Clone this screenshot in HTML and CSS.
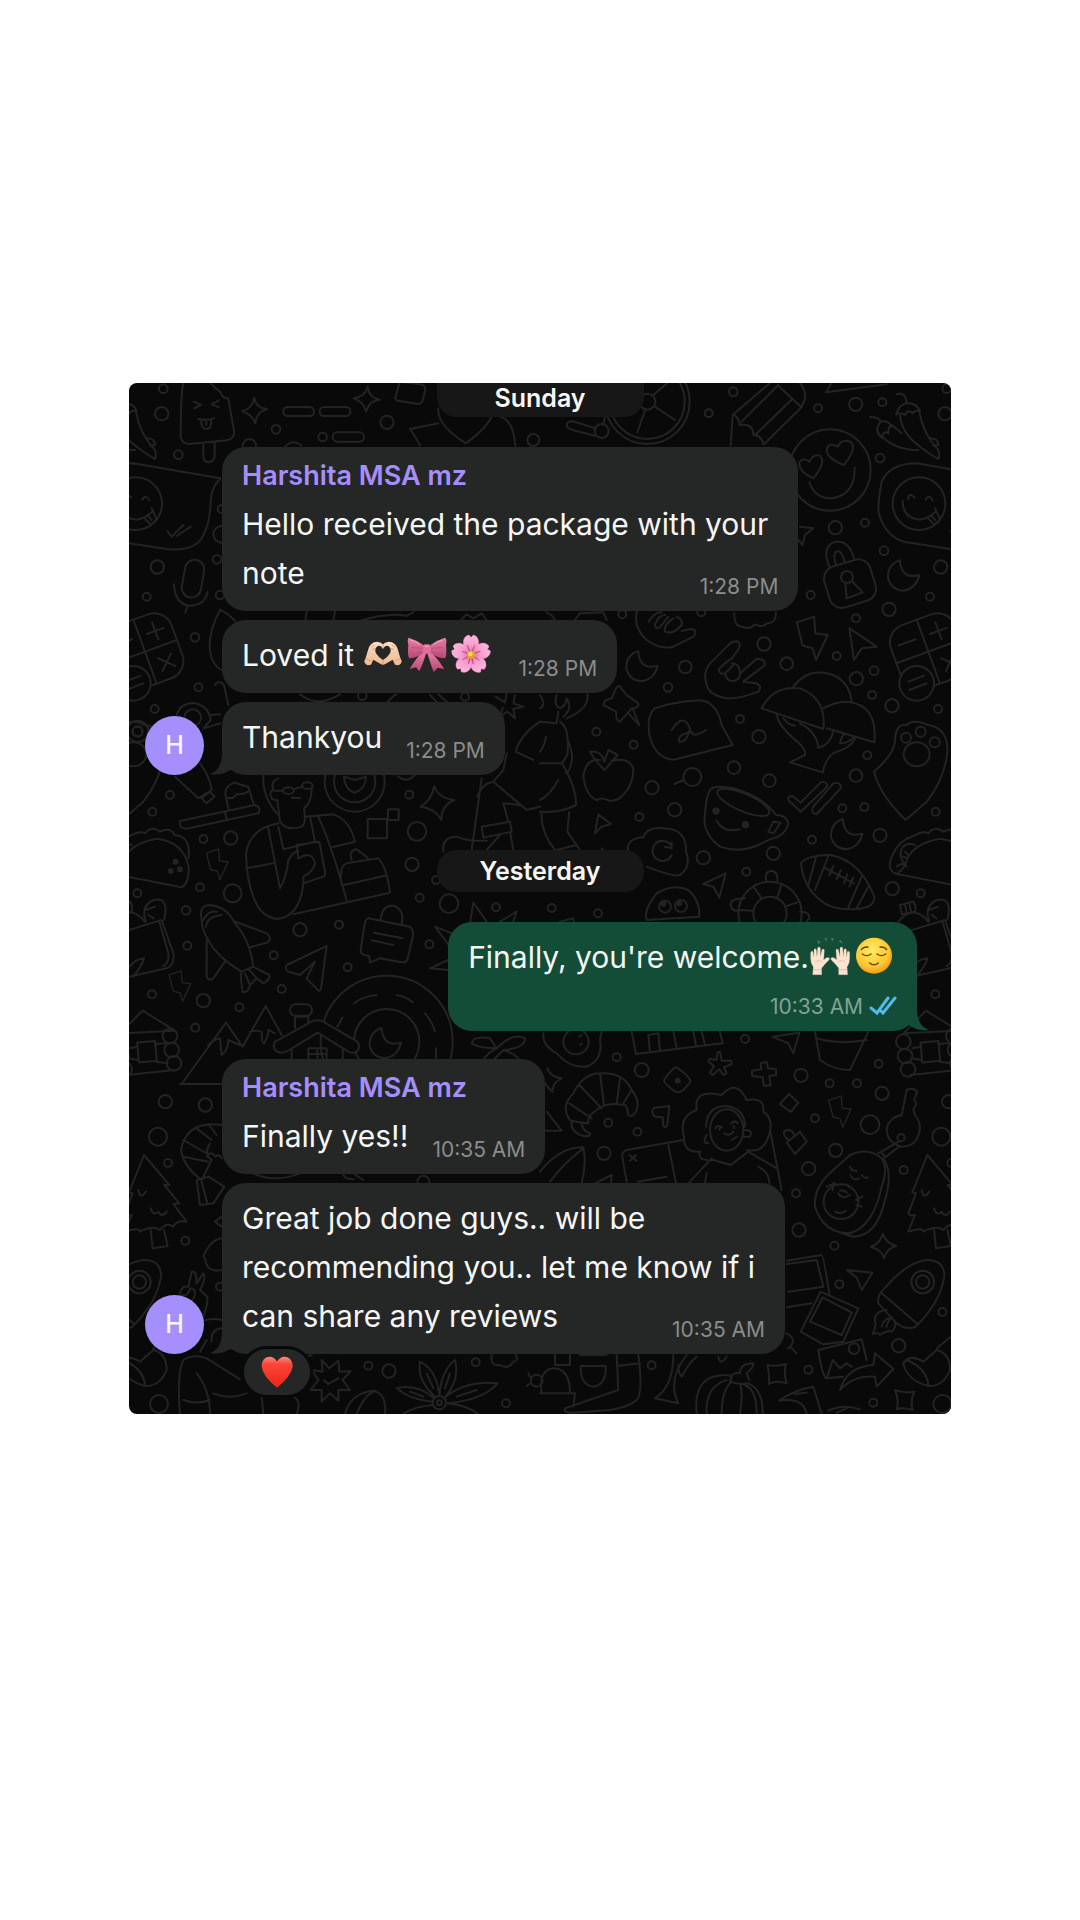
FILE: index.html
```html
<!DOCTYPE html>
<html lang="en">
  <head>
    <meta charset="UTF-8" />
    <meta name="viewport" content="width=device-width, initial-scale=1.0" />
    <title>Chat</title>
    <link rel="stylesheet" href="styles.css">
  </head>
  <body>
    <main class="chat">
      <!-- Doodle wallpaper -->
      <svg class="wallpaper" viewBox="27 24 2466 3093" preserveAspectRatio="xMidYMin slice" aria-hidden="true">
        <defs>
          <path id="bolt" d="M-47 -48L5 -65L9 -15L46 -10L11 65L1 30L-29 22Z" />
          <path id="moon" d="M-10 -46Q-48 -34 -46 8Q-36 43 0 45Q40 38 48 -2Q15 8 0 -12Q-10 -26 -10 -46Z" />
        </defs>
        <!-- Doodles that repeat on both edges -->
        <g id="edge">
          <g transform="translate(-1090 0)">
            <path d="M1070 58Q1098 50 1100 84M1068 118Q1080 85 1103 84Q1130 85 1140 108Q1125 104 1118 115Q1105 100 1095 120Q1080 110 1068 118M1080 122Q1085 175 1140 215Q1165 235 1195 252Q1200 240 1195 225Q1150 180 1138 110M1170 190Q1195 190 1195 210L1180 212M990 126Q1015 125 1022 140Q1000 165 1025 188Q1030 165 1045 175Q1045 150 1055 155Q1045 135 1022 140M1030 188Q1070 225 1135 225M1055 150Q1075 165 1085 175" />
            <circle cx="1137" cy="386" r="79" />
            <path d="M1390 310L1130 265Q1050 265 1025 320Q1010 400 1018 420Q1040 490 1100 502L1230 522Q1310 530 1335 490Q1360 450 1362 380Q1362 340 1390 312M1104 372Q1108 350 1124 368M1157 374Q1166 355 1178 376M1088 378Q1088 430 1140 434Q1165 430 1187 410M1162 428L1182 448Q1200 440 1198 428L1185 400M1172 420L1185 435M1232 468L1245 485L1280 450M1260 483L1302 455" />
            <g transform="rotate(-20 1165 830)">
              <rect x="1063" y="728" width="204" height="204" rx="55" />
              <path d="M1063 830H1267M1165 728V932M1188 782H1242M1215 755V809M1195 862L1236 902M1236 862L1195 902M1088 782H1142" />
            </g>
            <circle class="solid" cx="1130" cy="925" r="52" />
            <path d="M1105 920L1152 902M1108 945L1160 925" />
            <path d="M1065 1100Q1065 1045 1100 1050Q1120 1030 1165 1050Q1225 1060 1222 1130Q1215 1210 1160 1280L1097 1335Q1020 1260 1002 1190Q1060 1140 1065 1100Z" />
            <circle cx="1098" cy="1088" r="15" /><circle cx="1142" cy="1070" r="15" /><circle cx="1184" cy="1102" r="15" /><ellipse cx="1130" cy="1138" rx="39" ry="36" />
            <circle cx="1202" cy="576" r="20" /><circle cx="1170" cy="665" r="12" /><circle cx="1194" cy="1002" r="12" /><circle cx="1187" cy="1310" r="12" /><circle cx="1215" cy="116" r="20" /><circle cx="1220" cy="41" r="13" />
          </g>
          <g transform="translate(0 1035)">
            <path d="M-20 462Q10 440 10 420Q30 370 110 356Q190 365 206 440Q208 490 185 502L-20 462Q-55 450 -30 400Q-10 360 30 348Q60 330 75 340Q95 315 120 335Q150 320 165 345Q215 350 205 415M8 435Q-15 415 -5 385Q10 365 35 375M-20 440Q-5 425 10 440M5 395L15 405M0 410L12 415" />
            <circle class="dot" cx="167" cy="425" r="6" /><circle class="dot" cx="180" cy="448" r="6" /><circle class="dot" cx="152" cy="453" r="6" />
            <path d="M0 638L125 600L160 700Q165 735 140 745L20 772L0 638M118 605L145 700Q148 730 130 738M78 605Q60 560 100 540Q150 530 132 600M-15 605Q30 550 75 605M-10 555L30 545Q40 560 35 575L-5 583ZM5 553L10 578M18 550L23 575M85 585L100 595M78 570L105 560M40 770Q70 730 72 715Q40 720 30 740" />
            <path d="M0 940L165 932L68 872ZM27 985L52 980M105 972L135 970M27 1015L52 1020M107 1025L142 1030M20 1065L165 1050" />
            <circle cx="150" cy="948" r="22" /><circle cx="155" cy="990" r="22" /><circle cx="162" cy="1030" r="22" /><circle cx="0" cy="965" r="22" /><circle cx="5" cy="1008" r="22" /><circle cx="14" cy="1048" r="22" />
            <rect x="54" y="965" width="54" height="60" transform="rotate(-5 81 995)" />
            <circle cx="96" cy="823" r="12" /><circle cx="52" cy="520" r="12" />
          </g>
          <g transform="translate(0 1995)">
            <path d="M72 345L30 450Q20 460 38 460L15 520Q20 530 35 525L15 575Q60 560 60 575Q100 555 120 570Q140 545 160 560Q170 540 200 545L160 492L178 490L133 435L148 435ZM92 570L98 625L143 618L132 570M55 450Q60 480 78 455M92 505Q100 530 115 515Q125 535 140 515" />
            <circle cx="136" cy="185" r="20" /><circle cx="114" cy="290" r="27" /><circle cx="144" cy="369" r="12" /><circle cx="117" cy="1092" r="27" />
            <path d="M-65 755Q10 665 70 660Q125 660 123 710Q110 790 35 862Q5 870 -20 850L-75 790Q-78 770 -65 755ZM-68 757L40 850M-50 810Q-90 815 -85 845Q-80 860 -92 882Q-75 875 -70 885Q-50 870 -35 875Q-20 860 -25 845M-45 835Q-60 840 -65 860M-35 830Q-50 850 -50 860" />
            <circle cx="58" cy="726" r="34" /><circle cx="58" cy="726" r="20" />
            <path d="M0 970Q20 940 60 965L100 930Q140 940 140 990Q120 1040 75 1038Q10 1020 0 970M100 925L143 890M10 960Q70 985 75 1035" />
          </g>
        </g>
        <use href="#edge" x="2350" />

        <!-- Top left -->
        <g>
          <circle cx="468" cy="163" r="13" /><circle cx="608" cy="186" r="13" /><circle cx="801" cy="142" r="20" /><circle cx="175" cy="239" r="13" /><circle cx="291" cy="553" r="13" /><circle cx="300" cy="660" r="13" /><circle cx="225" cy="787" r="13" /><circle cx="235" cy="937" r="12" /><circle cx="388" cy="212" r="20" /><circle cx="727" cy="962" r="13" /><circle cx="1035" cy="965" r="12" /><circle cx="1240" cy="195" r="18" /><circle cx="305" cy="402" r="12" /><circle cx="305" cy="478" r="25" /><circle cx="53" cy="1069" r="32" /><circle cx="53" cy="1069" r="15" />
          <path d="M190 24Q182 60 182 185Q184 206 208 207L320 196Q345 190 342 168L325 70Q308 72 300 50Q285 40 272 24M250 205V245Q252 262 268 262Q284 258 284 240V202M222 80L243 90L222 100M296 76L275 88L297 97M235 132Q258 138 282 130M244 136V148Q248 162 260 162Q272 160 273 148V134M259 136V150" />
          <path d="M403 68Q408 100 441 102Q410 110 406 145Q396 118 366 108Q398 102 403 68ZM743 34Q746 68 779 74Q746 78 739 109Q730 80 701 70Q736 66 743 34Z" />
          <rect x="490" y="96" width="92" height="27" rx="13" /><rect x="599" y="96" width="92" height="27" rx="13" /><rect x="638" y="172" width="94" height="28" rx="13" />
          <path d="M838 24L826 68Q828 76 838 78L895 87Q905 85 909 76L916 40Q914 30 900 28L850 22M955 145L870 162Q890 190 900 212M955 100Q950 150 1038 205Q1100 160 1118 120Q1180 120 1186 212M495 215Q520 190 545 212" />
          <rect x="190" y="554" width="58" height="114" rx="29" transform="rotate(10 219 611)" />
          <path d="M162 628Q165 690 212 692Q255 690 263 650M203 692L196 714M300 704Q255 790 275 850Q290 880 305 885M300 704Q330 720 345 738M560 710L556 738M645 710L640 738M720 738Q800 712 860 722L880 712M1020 738L1040 718L1060 730L1085 715L1100 735M540 958Q590 1000 660 958M800 985Q820 960 830 958" />
          <path d="M285 930Q295 912 312 930L325 990M170 1020Q180 985 220 984Q265 990 272 1035L250 1060L300 1045M272 1020L300 1018M1127 965L1155 982L1160 955M1185 960L1180 985L1210 995L1180 1002L1185 1030L1162 1010L1140 1025L1148 998M1260 1040Q1200 1080 1187 1130L1240 1155M930 960L960 990M955 958L985 985" />
          <circle cx="218" cy="1028" r="25" />
        </g>

        <!-- Top right -->
        <g transform="translate(1260 0)">
          <circle cx="322" cy="80" r="127" /><circle cx="322" cy="80" r="112" /><circle cx="322" cy="80" r="24" /><circle cx="185" cy="168" r="21" />
          <path d="M316 104L292 172M345 95L405 135M340 60L382 24M168 160L95 138Q80 140 80 152Q82 160 95 164L165 182M190 148L195 125" />
          <circle cx="580" cy="50" r="13" /><circle cx="506" cy="115" r="12" /><circle cx="834" cy="100" r="12" /><circle cx="947" cy="88" r="20" /><circle cx="1027" cy="82" r="12" /><circle cx="1020" cy="249" r="13" /><circle cx="886" cy="458" r="20" /><circle cx="975" cy="443" r="12" /><circle cx="1032" cy="527" r="13" /><circle cx="812" cy="660" r="12" /><circle cx="1047" cy="703" r="20" /><circle cx="948" cy="730" r="12" /><circle cx="672" cy="807" r="20" /><circle cx="740" cy="866" r="19" /><circle cx="436" cy="876" r="19" /><circle cx="384" cy="937" r="13" /><circle cx="890" cy="843" r="12" /><circle cx="1002" cy="887" r="13" /><circle cx="949" cy="911" r="20" /><circle cx="996" cy="960" r="12" /><circle cx="1056" cy="992" r="20" /><circle cx="600" cy="1032" r="12" /><circle cx="657" cy="1085" r="20" /><circle cx="169" cy="1070" r="12" /><circle cx="281" cy="1109" r="12" /><circle cx="582" cy="1178" r="19" /><circle cx="688" cy="1217" r="19" /><circle cx="948" cy="1202" r="19" /><circle cx="982" cy="1141" r="12" /><circle cx="336" cy="1238" r="20" /><circle cx="247" cy="718" r="12" /><circle cx="484" cy="712" r="12" /><circle cx="457" cy="1206" r="27" />
          <path d="M403 1227L432 1215M580 118L690 24M782 98Q810 60 780 24M712 30L785 97M715 30L605 140M757 72L645 180M783 98L675 205M580 118Q595 125 600 150Q640 145 640 180Q665 180 670 208M572 212L578 120M875 24L858 52L1040 28" />
          <circle cx="870" cy="285" r="122" />
          <path d="M912 270Q860 250 860 225Q865 200 893 215Q905 190 930 200Q955 215 912 270ZM820 310Q775 290 778 262Q790 245 808 260Q820 235 840 242Q860 262 820 310ZM808 322Q825 370 875 370Q945 360 944 278M780 455L820 460L795 480L788 510L775 495" />
          <rect x="858" y="562" width="144" height="128" rx="38" transform="rotate(-17 930 626)" />
          <circle cx="921" cy="606" r="18" />
          <path d="M868 575Q845 520 880 502Q925 490 942 550M888 570Q875 530 895 528Q905 530 915 562M916 624L920 670L968 652L935 618M928 760L1010 815L965 820L942 855Z" />
          <use href="#moon" x="1090" y="602" /><use href="#moon" x="305" y="874" /><use href="#bolt" x="817" y="790" />
          <path d="M290 710Q280 760 320 795Q360 825 400 815L460 785Q475 765 455 762L425 768M326 740Q345 710 365 712M345 750Q355 720 375 720M345 750Q350 770 365 750L385 725M375 770Q370 750 400 730M375 770Q400 780 425 750Q430 735 410 725M498 920Q490 890 510 865L570 805Q595 790 600 810Q600 820 575 850Q545 870 536 885Q540 900 555 895Q560 920 580 918Q600 915 600 895Q600 865 575 865M555 895L580 870M600 895L650 852Q675 850 675 870L610 920L650 925Q668 935 655 950Q600 972 560 970Q500 960 498 920" />
          <path d="M583 715Q580 755 610 756Q630 765 645 748Q670 760 680 745Q710 745 707 712M240 935L260 960L295 985Q298 1000 275 1000L240 1040Q228 1040 228 1010L190 990Q190 975 215 970L228 940Q235 930 240 935ZM265 1015L298 1050L280 1005" />
          <path d="M345 1000Q400 980 480 976Q530 980 545 1050L578 1110L400 1154Q345 1150 328 1080Q320 1020 345 1000ZM395 1065Q430 1010 450 1060Q440 1105 418 1100Q410 1080 455 1070Q460 1090 498 1065" />
          <path d="M665 1000Q700 930 780 940Q860 970 850 1062ZM760 935Q810 870 890 905Q930 930 935 980M850 1000Q920 960 975 1000Q1010 1030 1003 1102L860 1060M710 1020Q715 1050 760 1090Q800 1120 795 1140L750 1162L848 1192Q860 1140 890 1130Q930 1120 945 1090M780 1045Q830 1070 835 1118Q870 1110 880 1070M730 1030Q745 1050 765 1052M900 1105Q905 1080 915 1078M900 1105Q930 1105 940 1085" />
          <path d="M193 1185Q160 1150 150 1130Q185 1125 193 1160L205 1125L233 1140Q210 1165 195 1185M180 1155Q140 1150 130 1200Q135 1260 170 1275Q190 1265 205 1276Q215 1280 235 1272Q280 1240 280 1180Q265 1145 215 1158" />
          <path d="M60 1040Q90 1060 82 1140L66 1165H0M66 1165Q110 1240 108 1290Q60 1315 0 1310M85 1100Q100 1140 95 1160Q90 1190 78 1195M18 1085Q15 1110 0 1130M55 1215Q30 1260 0 1275M5 1310Q0 1370 45 1425M88 1310L82 1370L120 1425M50 1425L110 1410M0 960Q20 990 0 1000M50 960Q40 990 60 1000Q80 990 80 970Q100 1000 70 1025M142 958Q150 1000 80 1030M20 712Q40 720 45 738M200 735L190 712L120 715L105 735M0 1040L50 1045L55 1010" />
        </g>

        <!-- Middle left -->
        <g transform="translate(0 1035)">
          <circle cx="150" cy="225" r="12" /><circle cx="250" cy="357" r="12" /><circle cx="332" cy="354" r="20" /><circle cx="240" cy="502" r="12" /><circle cx="338" cy="520" r="27" /><circle cx="198" cy="571" r="13" /><circle cx="202" cy="677" r="12" /><circle cx="250" cy="842" r="20" /><circle cx="358" cy="862" r="12" /><circle cx="226" cy="923" r="12" /><circle cx="540" cy="629" r="20" /><circle cx="657" cy="614" r="12" /><circle cx="461" cy="706" r="12" /><circle cx="485" cy="807" r="12" /><circle cx="683" cy="742" r="12" /><circle cx="868" cy="224" r="12" /><circle cx="891" cy="334" r="28" /><circle cx="876" cy="433" r="20" /><circle cx="899" cy="533" r="12" /><circle cx="987" cy="551" r="28" /><circle cx="1128" cy="562" r="12" /><circle cx="928" cy="673" r="12" /><circle cx="948" cy="480" r="12" />
          <use href="#bolt" transform="translate(292 433) scale(.7)" /><use href="#bolt" transform="translate(180 798) scale(.7)" />
          <path d="M165 170L235 235L275 210Q270 170 240 130M245 235L260 250L283 230L270 215ZM180 303L405 255Q425 262 415 280L200 326Q175 325 180 303M315 275L320 298M325 265L320 240Q305 200 345 187Q360 195 385 200L400 250M322 232Q340 240 350 222Q370 225 385 215" />
          <path d="M475 175Q450 185 460 210Q445 215 455 235Q465 242 472 240L480 305Q500 335 545 320Q560 310 552 265Q575 250 575 205M430 165Q425 230 475 285M465 212L490 212M520 208L546 200M515 233L540 235" />
          <ellipse cx="505" cy="212" rx="16" ry="10" /><ellipse cx="562" cy="197" rx="16" ry="10" />
          <path d="M475 310Q390 325 378 400Q380 480 400 530Q420 590 470 597Q540 590 550 490L610 470Q620 465 612 440L598 365L530 375L535 415M378 445L460 430M445 325L480 505Q500 470 505 420Q520 395 535 392M535 415Q575 390 585 430Q580 455 550 470V490M475 320L490 388L585 365L570 290M555 290L640 283Q690 300 705 365L635 382M595 290Q640 390 680 543M520 583L810 518Q800 440 775 415L680 430Q655 440 665 495M672 495L795 467M695 420Q685 390 710 388Q735 405 743 415" />
          <circle cx="704" cy="185" r="90" /><circle cx="704" cy="185" r="62" />
          <path d="M672 170Q675 210 705 218Q738 205 738 170L704 180Z" />
          <rect x="743" y="297" width="58" height="58" /><rect x="804" y="268" width="32" height="32" />
          <path d="M943 198Q955 235 1003 240Q965 255 964 300Q945 265 902 260Q935 240 943 198ZM1085 175L1055 390M1072 230Q1085 190 1120 185L1220 270L1260 260M1120 185L1150 150L1160 100M1085 320L1170 305L1175 335L1090 353ZM1150 250L1165 305M1150 250L1200 255M1140 345L1100 390M1170 335L1180 390M970 395Q965 350 1010 350Q1040 365 1100 362M835 170Q860 190 885 165" />
          <path d="M245 600Q235 555 270 555Q320 560 345 610Q390 660 400 740L365 755Q290 710 265 660Q245 630 245 600M258 620Q260 590 305 585M250 600Q265 570 290 575M345 605L440 640Q460 660 440 668L390 682M260 650V770Q268 785 280 775L315 725M365 755Q360 780 368 815Q385 820 390 795L375 760M390 795L410 775L388 750M410 775L430 790Q450 780 448 765L400 740" />
          <path d="M620 678L500 735Q492 748 505 755L540 765L585 725L560 775L595 812Q602 815 604 800ZM745 595L870 620Q882 630 878 650L862 720Q858 728 845 727L780 715L750 728L748 708Q720 705 722 690L735 605Q740 595 745 595M782 600Q785 555 820 557Q855 570 845 612M762 638L848 655M755 661L820 675" />
          <circle cx="800" cy="965" r="198" /><circle cx="800" cy="965" r="98" />
          <use href="#moon" x="795" y="970" />
          <path d="M702 850Q730 828 770 825M830 825Q860 830 878 847M915 880Q940 910 945 935M652 920L667 893M948 985V1020M185 1092L318 908L368 980L437 858L485 945M265 975Q280 960 300 955L305 1005Q325 990 325 960L360 975M390 935Q410 930 425 935Q425 970 432 970Q445 950 445 930L465 940M180 1092H330" />
          <path class="solid" d="M525 925V890H565V905M465 965L575 905Q592 897 610 905L712 965Q725 985 705 998Q690 1000 680 992L593 938L505 992Q480 1005 465 990Q458 978 465 965Z" />
          <rect x="510" y="853" width="66" height="34" rx="16" />
          <path d="M515 990V1020M668 990V1020M565 1015V985H620V1015M592 985V1015M565 1002H620" />
          <path d="M1060 548L1100 605M1060 548L1050 610M945 620L995 640M945 620L990 680M930 745L985 720M1190 575L1140 605M1190 575L1180 605M930 745L985 750M1055 970Q1060 945 1110 955L1130 985Q1180 935 1215 955Q1215 985 1150 990Q1200 1005 1200 1030M1130 985Q1100 1000 1090 1020M1055 970Q1080 985 1130 985M1150 990L1120 1020" />
        </g>

        <!-- Middle right -->
        <g transform="translate(1260 1035)">
          <circle cx="404" cy="269" r="20" /><circle cx="298" cy="291" r="12" /><circle cx="490" cy="413" r="20" /><circle cx="619" cy="455" r="12" /><circle cx="700" cy="400" r="20" /><circle cx="816" cy="359" r="12" /><circle cx="907" cy="265" r="12" /><circle cx="973" cy="261" r="12" /><circle cx="1020" cy="346" r="20" /><circle cx="1057" cy="506" r="20" /><circle cx="35" cy="564" r="12" /><circle cx="174" cy="580" r="12" /><circle cx="615" cy="957" r="12" /><circle cx="1016" cy="1031" r="12" />
          <use href="#moon" x="919" y="343" />
          <path d="M175 283L213 312L185 320L165 340ZM265 400Q255 355 310 352Q320 320 370 325Q440 325 438 395Q455 440 420 465Q400 472 320 440M392 375A30 30 0 1 0 395 405M395 368V385L375 380" />
          <path d="M515 205Q530 195 580 205Q670 230 708 285Q740 285 745 310Q735 350 690 358L655 375Q600 400 540 380Q485 340 495 280Q500 215 515 205ZM530 302Q550 340 600 328M685 335L700 305L722 308L700 340Z" />
          <ellipse cx="610" cy="247" rx="84" ry="26" transform="rotate(23 610 247)" />
          <circle class="dot" cx="528" cy="273" r="8" /><circle class="dot" cx="616" cy="314" r="8" />
          <path d="M758 228L782 248L845 185Q865 185 860 202L782 275L745 240Q742 228 758 228M818 262L880 190Q905 185 902 205L830 282Q812 282 818 262" />
          <path d="M783 430Q800 405 870 405Q960 420 1003 530Q1005 560 960 566Q880 575 840 540Q790 500 783 430ZM828 410L805 495M865 408L825 510M965 470L925 562M985 500L950 565M853 443L942 490M868 465L880 438M890 478L903 450M912 490L922 462M928 500L940 472" />
          <path d="M320 600Q310 570 350 520Q400 490 445 510Q480 540 478 590ZM490 492L557 460L538 533L520 500Z" />
          <circle cx="375" cy="560" r="18" /><circle cx="423" cy="558" r="18" /><circle class="dot" cx="370" cy="552" r="6" /><circle class="dot" cx="417" cy="550" r="6" />
          <circle cx="690" cy="580" r="95" /><circle cx="690" cy="580" r="50" />
          <path d="M640 500L665 535M725 492L712 532M778 545L735 560M597 570L640 572M680 485Q670 455 695 452Q715 455 712 483M615 535Q570 535 572 555Q575 575 597 572M780 575Q810 575 808 595L795 610M60 605L100 595L102 610M180 400L187 385L192 400" />
          <path d="M10 940Q5 975 50 1000Q90 1045 140 1040Q190 1020 180 960L185 935M275 935L288 1002L548 970L540 935M330 998L325 945L355 940L360 992M400 935L410 985M460 935L468 978M485 935L495 975M697 950L778 938L760 1000L745 970ZM825 935L840 1020Q880 1050 930 1050L985 935M830 955Q900 975 980 960M120 975L125 970M118 950L125 945" />
          <circle cx="108" cy="965" r="38" />
        </g>

        <!-- Bottom left -->
        <g transform="translate(0 1995)">
          <circle cx="256" cy="195" r="20" /><circle cx="196" cy="602" r="12" /><circle cx="300" cy="740" r="12" /><circle cx="745" cy="977" r="12" /><circle cx="807" cy="993" r="20" /><circle cx="1067" cy="967" r="12" /><circle cx="1158" cy="1090" r="12" /><circle cx="910" cy="425" r="18" /><circle cx="1250" cy="1022" r="18" />
          <path d="M305 255Q200 240 183 330Q190 380 245 420L275 360Q250 340 270 310M190 300L260 340M225 262L275 300M265 252L290 285M190 350L265 365M230 420L240 495L280 490L313 440L265 410ZM245 425L262 490M260 350Q275 330 285 350Q300 340 305 355" />
          <path d="M250 650Q270 600 305 595M285 545L305 560M305 530L285 545M255 655Q260 700 305 690M180 760Q185 735 205 740L215 695Q230 690 230 730L250 700Q260 710 240 750L262 770Q265 800 240 850M185 765Q205 770 210 745Q225 745 225 760M200 785Q215 790 225 765M230 850Q270 830 305 840M305 865Q270 870 275 905M240 935L260 900" />
          <path d="M180 1122Q170 1000 190 960Q220 940 260 955L360 1018M230 1000Q270 1050 270 1122M190 1080Q230 1095 270 1080M280 1060Q330 1080 380 1060M430 1122L425 1070M530 1122Q545 1080 520 1070M400 400Q460 430 540 400M670 405L680 415L700 418M700 400L730 420" />
          <path d="M605 960L628 985L655 962L658 995L692 993L668 1020L690 1050L655 1050L655 1082L630 1060L605 1085L605 1050L572 1050L595 1020L575 990L608 995ZM612 1020L625 1032L655 1015M675 1122Q690 1060 760 1052Q800 1060 795 1122M710 1122Q730 1070 760 1055" />
          <circle cx="958" cy="1088" r="20" /><circle cx="958" cy="1088" r="7" />
          <path d="M945 1070Q890 1020 900 965Q950 990 958 1065Q965 990 1005 960Q1020 1020 975 1072Q1040 1020 1133 1030Q1090 1080 980 1090Q1040 1095 1075 1122M938 1085Q870 1080 830 1045Q890 1030 943 1075M938 1095Q880 1100 850 1122M920 1000L940 1045M990 1000L975 1045M1070 1050L1010 1070M870 1055L910 1070M1115 945Q1110 980 1140 975Q1165 990 1180 965Q1195 965 1188 945M1230 1010L1225 1000M1228 1032L1220 1038M550 955L575 945" />
        </g>

        <!-- Bottom right -->
        <g transform="translate(1260 1995)">
          <circle cx="305" cy="90" r="21" /><circle cx="192" cy="340" r="20" /><circle cx="205" cy="248" r="12" /><circle cx="292" cy="275" r="12" /><circle cx="783" cy="106" r="20" /><circle cx="869" cy="130" r="12" /><circle cx="951" cy="130" r="12" /><circle cx="1026" cy="160" r="20" /><circle cx="1091" cy="390" r="12" /><circle cx="825" cy="235" r="12" /><circle cx="990" cy="254" r="28" /><circle cx="887" cy="331" r="20" /><circle cx="806" cy="386" r="20" /><circle cx="768" cy="460" r="12" /><circle cx="777" cy="570" r="20" /><circle cx="883" cy="617" r="12" /><circle cx="898" cy="733" r="12" /><circle cx="1207" cy="816" r="12" /><circle cx="1076" cy="917" r="20" /><circle cx="805" cy="989" r="12" /><circle cx="1000" cy="1088" r="12" /><circle cx="335" cy="976" r="12" /><circle cx="230" cy="52" r="12" />
          <path d="M90 240Q60 200 100 160Q130 100 180 100Q250 95 275 150Q300 180 290 210Q280 235 265 225Q260 190 250 195Q200 185 170 210Q140 230 145 250Q95 245 90 240M118 135L185 205M180 100L192 195M240 115L230 192M275 150L250 190M88 190L155 235M95 245Q90 270 120 285Q150 295 150 280Q130 275 125 252" />
          <path d="M410 82Q400 80 372 120Q370 128 405 155Q420 160 430 150L452 125Q450 110 410 82ZM540 35L545 62L573 62L575 72L552 82L560 100L550 105L538 88L518 105L510 98L522 78L505 65L510 56L530 60L532 38ZM662 70L680 66L684 85L708 88V105L688 108L692 135L672 138L668 112L636 108V92L664 88ZM747 162L775 188L752 216L720 192ZM740 308L780 275L800 305L765 342ZM745 300Q720 275 742 270Q760 270 762 285M337 212Q340 200 360 202L388 198L382 255Q378 265 370 258L368 232L345 230Q337 225 337 212" />
          <circle class="dot" cx="413" cy="122" r="6" />
          <use href="#bolt" transform="translate(900 215) scale(.72)" />
          <path d="M480 335Q430 340 432 290Q415 230 470 210Q460 145 545 165Q590 115 620 180Q675 170 670 215Q705 240 685 290Q670 340 620 330M480 335Q470 365 520 360L572 375L625 335L710 385M655 380Q690 400 688 430M445 430L515 355M495 430L500 400M498 260Q500 200 557 198Q615 205 615 260M505 310Q485 310 500 285M615 270Q640 270 630 290L612 290M526 265Q532 252 546 262M573 250Q585 240 594 250M552 280Q570 290 580 275M575 300L590 290M542 262L538 268M580 258L584 264" />
          <ellipse cx="560" cy="270" rx="50" ry="62" />
          <path d="M430 300L260 330Q245 335 247 350L260 425M385 315L408 430M268 345L290 362M270 362L287 345M293 425L380 410M690 270L725 450M0 395Q60 320 130 322Q140 370 125 430M130 325Q70 370 30 425M20 215L65 272H15M22 85Q30 110 65 115Q35 130 38 155Q25 145 15 130M165 430L215 405L213 430" />
          <path d="M1100 150Q1120 140 1132 155L1122 180L1130 190L1120 210L1125 225Q1145 250 1138 275Q1130 320 1085 320Q1040 310 1040 265Q1050 230 1085 225ZM1075 305L1025 335M1080 318L1035 352M1015 340Q1025 330 1035 352" />
          <circle cx="1083" cy="293" r="11" />
          <path d="M930 345Q985 320 1025 355Q1045 385 1025 440Q1000 560 930 580Q850 580 825 500Q820 440 880 390ZM1030 355Q1060 400 1035 480Q1010 590 940 590L905 580M930 380Q935 395 950 392M965 405Q975 418 983 412M932 405Q940 425 958 415M895 460Q905 480 930 465M900 452Q915 450 920 458M885 515Q905 525 918 512M860 440L885 430M878 450L880 428M948 480L968 470M950 495L965 500" />
          <circle cx="903" cy="485" r="52" />
          <path d="M1028 582Q1040 610 1068 618Q1040 625 1032 655Q1025 628 992 620Q1020 612 1028 582ZM920 690L997 698L965 750L950 712ZM740 662L845 645Q850 645 868 760M740 672L830 660L850 740L745 755M740 802L815 790M842 755L955 805L910 905L850 913L782 875ZM848 772L935 818L905 885L810 845ZM835 930L965 898L980 960M835 930Q845 1000 858 1015L910 1010M860 1015L878 960L900 985L920 970L935 980M900 1050Q920 980 1000 975L1005 940L1060 987L1010 1040L1005 1010Q940 1005 900 1050ZM740 880Q775 900 745 925M750 920L770 940" />
          <circle cx="942" cy="926" r="16" />
          <path d="M682 975Q710 980 738 972Q730 1000 740 1030Q710 1020 686 1032Q690 1005 682 975ZM1065 1050Q1095 1060 1123 1055Q1110 1080 1118 1110Q1090 1100 1070 1108Q1078 1080 1065 1050ZM718 1082Q760 1050 820 1040L845 1122M718 1082Q790 1070 800 1122M765 1062L800 1058M865 1112Q910 1090 960 1108M890 1118L920 1105" />
          <path d="M470 1122Q460 1030 520 1010Q560 1000 575 1010L570 1025Q600 1035 625 1030Q670 1050 668 1122M500 1122Q495 1040 560 1020M545 1122Q545 1050 575 1025M600 1122Q610 1060 600 1030M650 1122Q650 1050 615 1035M575 1005Q590 995 600 1000Q600 970 640 970Q640 985 620 1000L628 1020" />
          <path d="M45 945V975H90V945M5 1060Q-5 985 45 985Q90 990 90 1060M0 1060H105L100 1100M120 945H200M122 978H197Q200 1035 160 1040Q120 1035 122 978M230 945L235 1050L75 1105Q70 1120 100 1118L210 1110Q270 1100 290 1080Q310 1060 295 945M230 978L300 970M400 945Q400 1040 345 1075L415 1090Q380 1020 440 945M415 975Q415 1000 425 1010Q445 970 470 950M535 950Q540 980 560 950" />
        </g>
      </svg>

      <div class="day day-first">Sunday</div>

      <section class="group">
        <span class="avatar">H</span>
        <div class="stack">
          <div class="bubble long">
            <h2 class="name">Harshita MSA mz</h2>
            <p>Hello received the package with your<br>note</p>
            <time>1:28 PM</time>
          </div>
          <div class="bubble">
            <p>
              Loved it
              <svg class="emoji" viewBox="42 42 126 126" role="img" aria-label="heart hands">
                <defs>
                  <linearGradient id="skin" x1="0" y1="0" x2="0" y2="1"><stop offset="0" stop-color="#fbdcbf" /><stop offset="1" stop-color="#efb98f" /></linearGradient>
                </defs>
                <path fill="url(#skin)" d="M49 126L53 117L61 90Q65 76 78 70Q94 65 105 76Q116 65 132 70Q145 76 149 90L157 117L161 126Q161 134 151 139L141 137L134 122L112 135Q105 139 98 135L76 122L69 137L59 139Q49 134 49 126Z" />
                <path fill="#252726" d="M105 90Q98 77 88 82Q78 90 84 103Q90 114 105 123Q120 114 126 103Q132 90 122 82Q112 77 105 90Z" />
                <path fill="none" stroke="#c98f6c" stroke-width="2" d="M105 76V88M105 124V136M53 118L72 128M157 118L138 128M68 84L79 78M142 84L131 78M72 92L81 88M138 92L129 88" />
              </svg><svg class="emoji" viewBox="174 42 126 126" role="img" aria-label="ribbon">
                <defs>
                  <linearGradient id="bow" x1="0" y1="0" x2="0" y2="1"><stop offset="0" stop-color="#e87fa5" /><stop offset="1" stop-color="#b94777" /></linearGradient>
                </defs>
                <path fill="url(#bow)" d="M225 98Q205 115 185 150L204 145L214 157Q229 125 234 102ZM247 98Q267 115 289 150L269 146L257 159Q244 125 238 102Z" />
                <path fill="url(#bow)" d="M225 77Q205 63 182 56Q177 60 181 78Q178 105 183 118Q204 118 226 103ZM248 77Q268 63 291 56Q298 60 294 78Q297 105 292 118Q270 118 247 103Z" />
                <path fill="none" stroke="#b34a77" stroke-width="2" d="M190 86Q208 85 225 89M285 86Q268 85 250 89M192 109Q209 104 225 96M283 109Q264 104 249 96" />
                <rect x="224" y="76" width="25" height="28" rx="8" fill="#e16d99" />
                <path fill="none" stroke="#f7a9c1" stroke-width="3" d="M188 63Q205 68 216 77M284 63Q267 68 256 77M230 82H243" />
              </svg><svg class="emoji" viewBox="306 42 126 126" role="img" aria-label="cherry blossom">
                <defs>
                  <radialGradient id="petals" gradientUnits="userSpaceOnUse" cx="369" cy="107" r="60"><stop offset="0" stop-color="#e85da8" /><stop offset=".45" stop-color="#f79bcd" /><stop offset="1" stop-color="#fdb9de" /></radialGradient>
                  <path id="petal" d="M369 107Q343 88 346 65Q350 50 363 48L369 55L376 48Q388 50 392 66Q395 88 369 107Z" />
                </defs>
                <g fill="url(#petals)" stroke="#e67bb8" stroke-width="1">
                  <use href="#petal" /><use href="#petal" transform="rotate(72 369 107)" /><use href="#petal" transform="rotate(144 369 107)" /><use href="#petal" transform="rotate(216 369 107)" /><use href="#petal" transform="rotate(288 369 107)" />
                </g>
                <path stroke="#8c2456" stroke-width="2" d="M369 106L358 79M369 106L380 79M369 106L397 97M369 106L394 124M369 106L376 135M369 106L361 135M369 106L344 123M369 106L342 97" />
                <circle cx="369" cy="107" r="12" fill="#e6a326" /><circle cx="367" cy="105" r="7" fill="#fbd95a" />
              </svg>
            </p>
            <time>1:28 PM</time>
          </div>
          <div class="bubble">
            <p>Thankyou</p>
            <time>1:28 PM</time>
            <svg class="tail" viewBox="0 0 30 22" aria-hidden="true"><path d="M0 21Q12 17 12 0L30 4V19L20 17Q11 23 0 21Z" /></svg>
          </div>
        </div>
      </section>

      <div class="day">Yesterday</div>

      <section class="group mine">
        <div class="bubble sent">
          <p>
            Finally, you're welcome.<svg class="emoji" viewBox="55 49 126 126" role="img" aria-label="raising hands">
              <path fill="#4d7165" d="M79 64L91 70L83 77ZM101 59L109 58L108 69ZM122 58L130 59L124 69ZM149 63L157 75L145 70Z" />
              <path id="palm" fill="#fbe3d1" stroke="#d9b296" stroke-width="1" d="M66 168L68 145Q60 135 60 120L60 102Q62 95 67 99L70 115L70 93Q73 87 77 93L79 113L81 87Q86 82 89 88L89 113L94 93Q99 89 101 94L99 124Q107 115 114 117Q119 119 114 125L101 138Q96 146 93 147L93 168Z" />
              <use href="#palm" transform="translate(237 0) scale(-1 1)" />
              <path fill="none" stroke="#d9b296" stroke-width="2" d="M67 153H93M144 153H170M74 130Q85 122 96 129M141 129Q152 122 163 130" />
            </svg><svg class="emoji" viewBox="188 49 126 126" role="img" aria-label="relieved face">
              <defs>
                <radialGradient id="face" cx=".45" cy=".35" r=".7"><stop offset="0" stop-color="#ffec62" /><stop offset=".65" stop-color="#fdc832" /><stop offset="1" stop-color="#ec9015" /></radialGradient>
              </defs>
              <circle cx="251" cy="111" r="54" fill="url(#face)" />
              <path fill="none" stroke="#6b3a08" stroke-width="4" stroke-linecap="round" d="M216 106Q229 116 242 106M260 106Q273 116 286 106M238 133Q251 144 264 133M213 93Q219 84 233 85M269 85Q283 84 289 93" />
            </svg>
          </p>
          <time>10:33 AM
            <svg class="ticks" viewBox="0 0 28 20" role="img" aria-label="Read"><path d="M2 12L8 17L19 2M11 14L14 17L26 2" /></svg>
          </time>
          <svg class="tail" viewBox="0 0 30 22" aria-hidden="true"><path d="M30 21Q18 17 18 0L0 4V19L10 16Q19 23 30 21Z" /></svg>
        </div>
      </section>

      <section class="group">
        <span class="avatar">H</span>
        <div class="stack">
          <div class="bubble named">
            <h2 class="name">Harshita MSA mz</h2>
            <p>Finally yes!!</p>
            <time>10:35 AM</time>
          </div>
          <div class="bubble long">
            <p>Great job done guys.. will be<br>recommending you.. let me know if i<br>can share any reviews</p>
            <time>10:35 AM</time>
            <svg class="tail" viewBox="0 0 30 22" aria-hidden="true"><path d="M0 21Q12 17 12 0L30 4V19L20 17Q11 23 0 21Z" /></svg>
            <span class="reaction">
              <svg viewBox="386 228 104 104" role="img" aria-label="red heart">
                <defs>
                  <linearGradient id="heart" x1="0" y1="0" x2="0" y2="1"><stop offset="0" stop-color="#ff8d7c" /><stop offset=".25" stop-color="#fb4437" /><stop offset="1" stop-color="#ee2418" /></linearGradient>
                </defs>
                <path fill="url(#heart)" d="M438 248Q430 233 415 233Q391 235 391 263Q394 292 438 328Q482 292 486 263Q485 235 462 233Q447 233 438 248Z" />
              </svg>
            </span>
          </div>
        </div>
      </section>
    </main>
  </body>
</html>
```

FILE: styles.css
```css
body {
  margin: 0;
  padding: 383px 20px;
  background: #fff;
  font-family: Inter, "Liberation Sans", sans-serif;
  color: #f5f6f6;
}
.chat {
  position: relative;
  max-width: 822px;
  margin: 0 auto;
  padding-bottom: 60px;
  box-sizing: border-box;
  background: #090909;
  border-radius: 8px;
  overflow: hidden;
}
.wallpaper {
  position: absolute;
  inset: 0;
  width: 100%;
  height: 100%;
  fill: none;
  stroke: #232323;
  stroke-width: 6;
  stroke-linecap: round;
  stroke-linejoin: round;
}
.wallpaper .solid {
  fill: #090909;
}
.wallpaper .dot {
  fill: #232323;
}

/* Day labels */
.day {
  position: relative;
  width: 207px;
  margin: 75px auto 30px;
  border-radius: 20px;
  background: #171717;
  font-size: 25px;
  font-weight: 600;
  line-height: 42px;
  text-align: center;
}
.day-first {
  margin-top: 0;
  padding-bottom: 4px;
  border-radius: 0 0 20px 20px;
  line-height: 30px;
}

/* Messages */
.group {
  position: relative;
  display: flex;
  align-items: flex-end;
  gap: 18px;
  padding: 0 34px 0 16px;
}
.mine {
  justify-content: flex-end;
  margin-bottom: 28px;
}
.avatar {
  flex: none;
  width: 59px;
  height: 59px;
  border-radius: 50%;
  background: #a58fff;
  font-size: 25px;
  font-weight: 500;
  line-height: 59px;
  text-align: center;
}
.stack {
  display: flex;
  flex-direction: column;
  align-items: flex-start;
  gap: 9px;
}
.bubble {
  position: relative;
  display: flex;
  flex-wrap: wrap;
  align-items: flex-end;
  column-gap: 24px;
  padding: 11px 20px 13px;
  border-radius: 24px;
  background: #252726;
}
.bubble p {
  margin: 0;
  font-size: 30px;
  line-height: 49px;
}
.name {
  width: 100%;
  margin: 0 0 6px;
  color: #a58fff;
  font-size: 27px;
  font-weight: 600;
  line-height: 36px;
}
time {
  margin-bottom: -1px;
  color: #8b8c8c;
  font-size: 21px;
  line-height: 25px;
}
.long,
.sent {
  flex-direction: column;
  flex-wrap: nowrap;
}
.long p {
  align-self: flex-start;
  padding-right: 10px;
}
.long time {
  margin-top: -24px;
}
.named {
  display: grid;
  grid-template-columns: auto auto;
}
.named .name {
  grid-column: 1 / 3;
  width: auto;
}
.sent {
  background: #144d37;
}
.sent time {
  margin-top: 12px;
  color: #7fa394;
}
.emoji {
  width: 42px;
  height: 42px;
  margin-right: 2px;
  vertical-align: -9px;
}
.ticks {
  width: 28px;
  height: 20px;
  vertical-align: -2px;
  fill: none;
  stroke: #53b9e6;
  stroke-width: 3;
  stroke-linecap: round;
}
.tail {
  position: absolute;
  left: -12px;
  bottom: 0;
  width: 30px;
  height: 22px;
  fill: #252726;
}
.sent .tail {
  left: auto;
  right: -12px;
  fill: #144d37;
}
.reaction {
  position: absolute;
  left: 19px;
  bottom: -44px;
  display: flex;
  align-items: center;
  justify-content: center;
  width: 66px;
  height: 46px;
  border: 3px solid #090909;
  border-radius: 26px;
  background: #252726;
}
.reaction svg {
  width: 34px;
  height: 34px;
}
```
